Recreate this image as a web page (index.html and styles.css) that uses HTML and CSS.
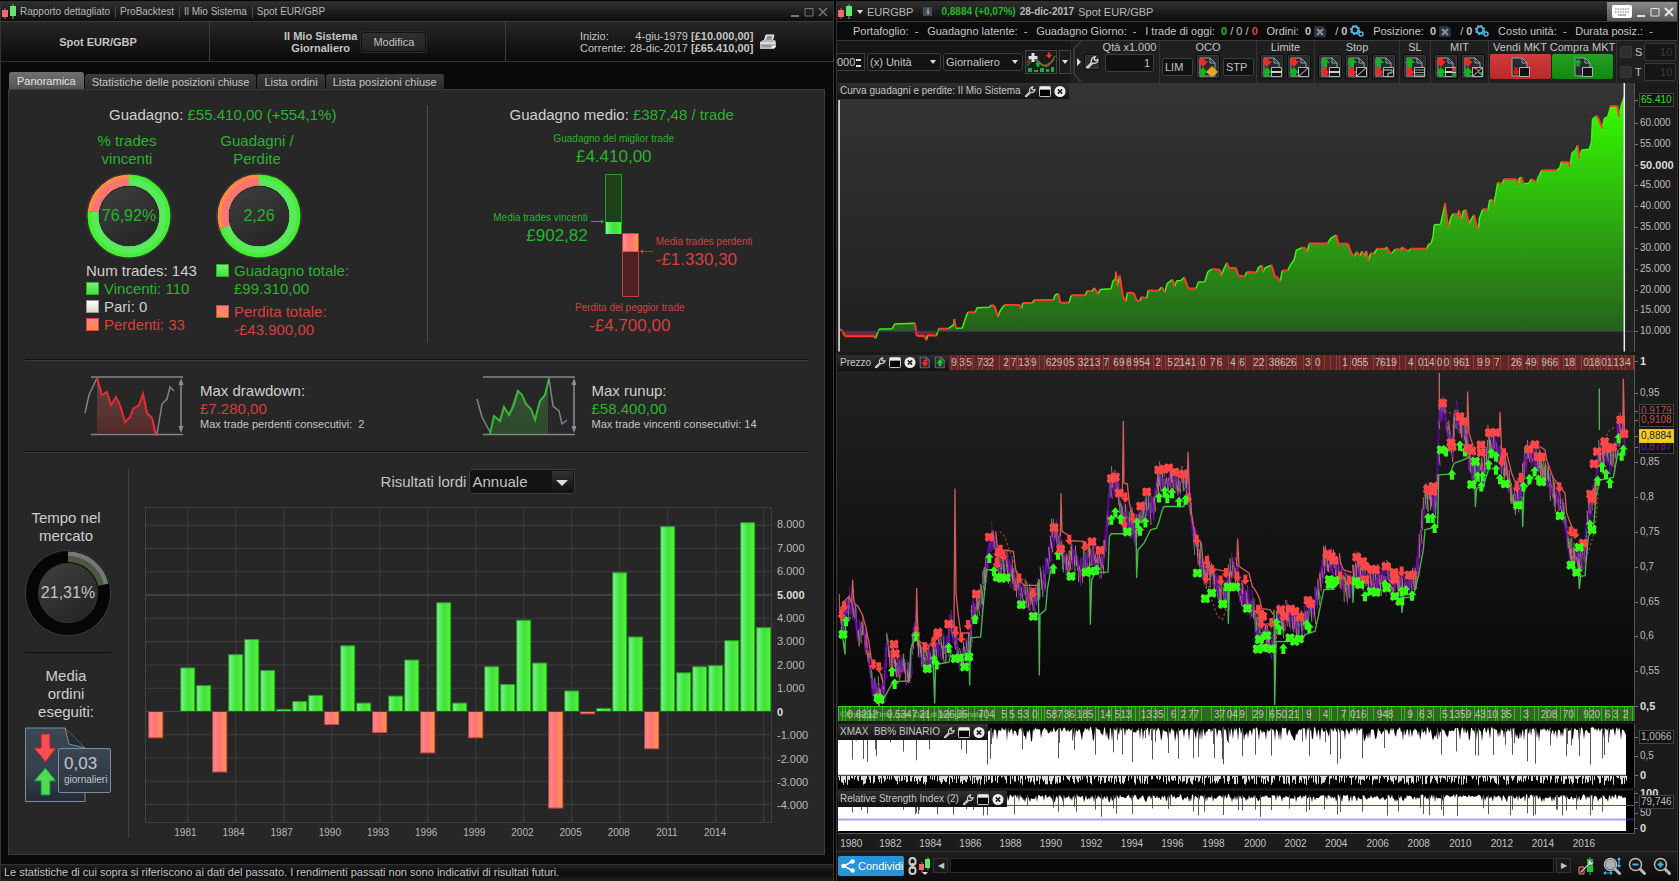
FILE: index.html
```html
<!DOCTYPE html>
<html lang="it">
<head>
<meta charset="utf-8">
<title>Rapporto dettagliato - Spot EUR/GBP</title>
<link rel="stylesheet" href="styles.css">
</head>
<body>
<svg class="defs" aria-hidden="true">
  <defs>
    <linearGradient id="g-green-h"><stop offset="0" stop-color="#7dfb84"/><stop offset=".3" stop-color="#55e85e"/><stop offset=".55" stop-color="#3fe03a"/><stop offset="1" stop-color="#4dfb35"/></linearGradient>
    <linearGradient id="g-red-h"><stop offset="0" stop-color="#ff8f8f"/><stop offset=".45" stop-color="#fb7272"/><stop offset="1" stop-color="#ff9850"/></linearGradient>
    <linearGradient id="g-equity" x2="0" y2="1"><stop offset="0" stop-color="#35ff00"/><stop offset="1" stop-color="#255a1e"/></linearGradient>
    <linearGradient id="g-down" x2="0" y2="1"><stop offset="0" stop-color="#5d4646"/><stop offset="1" stop-color="#552a28"/></linearGradient>
    <linearGradient id="g-up" x2="0" y2="1"><stop offset="0" stop-color="#3f4f40"/><stop offset="1" stop-color="#2b4a29"/></linearGradient>
    <linearGradient id="g-hub" x2=".6" y2="1"><stop offset="0" stop-color="#404040"/><stop offset="1" stop-color="#262626"/></linearGradient>
    <linearGradient id="g-slate" x2="0" y2="1"><stop offset="0" stop-color="#3a4754"/><stop offset=".6" stop-color="#35414c"/><stop offset="1" stop-color="#232b35"/></linearGradient>
  </defs>
  <symbol id="candles" viewBox="0 0 15 15"><path d="M3 4v11" stroke="#e55"/><path d="M11 0v15" stroke="#5c6"/><path d="M0 6h6v7H0z" fill="#f46a6a"/><path d="M8 2h6v10H8z" fill="#5fe86a"/></symbol>
  <symbol id="wrench" viewBox="0 0 14 14"><path d="M1.5 12.5l5-5C5.500 5 7.500 1.500 10.500 1.500L9 4l1.500 1.500L13 4.500c0 3-3 4.500-5 3.500l-5 5z" fill="#333" stroke="#ddd" stroke-width="1.200" stroke-linejoin="round"/></symbol>
  <symbol id="win" viewBox="0 0 13 12"><rect x=".5" y=".5" width="12" height="11" rx="1" fill="#000" stroke="#ddd"/><path d="M1 1h11v3H1z" fill="#eee"/></symbol>
  <symbol id="shut" viewBox="0 0 13 13"><circle cx="6.500" cy="6.500" r="6" fill="#eee"/><path d="M4.200 4.200l4.600 4.600M8.800 4.200l-4.600 4.600" stroke="#222" stroke-width="1.800"/></symbol>
  <symbol id="down" viewBox="0 0 10 10"><path d="M3 0h4v4h3L5 10 0 4h3z"/></symbol>
  <symbol id="up" viewBox="0 0 10 10"><path d="M3 10h4V6h3L5 0 0 6h3z"/></symbol>
  <symbol id="doc" viewBox="0 0 20 20"><path d="M2 1h10l5 5v13H2z" fill="#262b30" stroke="#9aa4ac"/><path d="M12 1v5h5" fill="none" stroke="#9aa4ac"/></symbol>
  <symbol id="ord-sell-buy" viewBox="0 0 20 20"><use href="#doc"/><use href="#down" width="10" height="10" fill="#ff2424"/><use href="#up" y="10" width="10" height="10" fill="#10b51c"/></symbol>
  <symbol id="ord-buy-sell" viewBox="0 0 20 20"><use href="#doc"/><use href="#up" width="10" height="10" fill="#10b51c"/><use href="#down" y="10" width="10" height="10" fill="#ff2424"/></symbol>
  <symbol id="card" viewBox="0 0 20 20"><path d="M9.500 10.500h10v9h-10z" fill="#111" stroke="#aab2b8"/></symbol>
  <symbol id="c-line" viewBox="0 0 20 20"><use href="#card"/><path d="M9 15h11" stroke="#ccc" stroke-width="2"/></symbol>
  <symbol id="c-diag" viewBox="0 0 20 20"><use href="#card"/><path d="M10 19l9-8" stroke="#ccc"/></symbol>
  <symbol id="c-step" viewBox="0 0 20 20"><use href="#card"/><path d="M10 13h8v3h-4v3" fill="none" stroke="#ccc"/></symbol>
  <symbol id="c-rows" viewBox="0 0 20 20"><use href="#card"/><path d="M10 13h9M10 15.500h9M10 18h9" stroke="#999"/></symbol>
  <symbol id="c-duo" viewBox="0 0 20 20"><use href="#c-line"/><path d="M16 11h4v4h-4z" fill="#d33"/><path d="M16 16h4v4h-4z" fill="#294"/></symbol>
  <symbol id="c-cross" viewBox="0 0 20 20"><use href="#c-diag"/><path d="M10 11h4l3 4z" fill="#e44"/><path d="M14 15l5 4v-4z" fill="#294"/></symbol>
  <symbol id="mini-x" viewBox="0 0 12 11"><path d="M0 0h9l3 3v8H0z" fill="#2a3138"/><path d="M3 3l6 6M9 3l-6 6" stroke="#87919a" stroke-width="2"/></symbol>
  <symbol id="gears" viewBox="0 0 14 12"><circle cx="5" cy="5" r="3.400" fill="none" stroke="#4fb4e6" stroke-width="2"/><circle cx="5" cy="5" r="4.600" fill="none" stroke="#4fb4e6" stroke-width="1.200" stroke-dasharray="1.800"/><circle cx="11" cy="9" r="2" fill="none" stroke="#4fb4e6" stroke-width="1.500"/></symbol>
  <symbol id="lens" viewBox="0 0 18 18"><path d="M11 11l5.500 5.500" stroke="#bbb" stroke-width="3" stroke-linecap="round"/><circle cx="7.500" cy="7.500" r="6" fill="#161616" stroke="#bbb" stroke-width="1.500"/></symbol>
</svg>

<div class="desktop">
<section class="window report">
  <header class="titlebar">
    <svg class="logo"><use href="#candles"/></svg>
    <span class="crumb">Rapporto dettagliato</span><span class="crumb">ProBacktest</span><span class="crumb">Il Mio Sistema</span><span class="crumb">Spot EUR/GBP</span>
    <span class="winbtns">
      <button aria-label="Riduci"><svg viewBox="0 0 10 10"><path d="M1 9h8" stroke-width="2"/></svg></button>
      <button aria-label="Ingrandisci"><svg viewBox="0 0 10 10"><path d="M1 1.500h8v7.500H1z"/></svg></button>
      <button aria-label="Chiudi"><svg viewBox="0 0 10 10"><path d="M1 1l8 8M9 1L1 9" stroke-width="1.500"/></svg></button>
    </span>
  </header>
  <div class="summary">
    <div class="cell instrument"><b>Spot EUR/GBP</b></div>
    <div class="cell system"><b>Il Mio Sistema<br>Giornaliero</b><button class="edit">Modifica</button></div>
    <div class="cell period">
      <dl><dt>Inizio:</dt><dd>4-giu-1979 <b>[£10.000,00]</b></dd><dt>Corrente:</dt><dd>28-dic-2017 <b>[£65.410,00]</b></dd></dl>
      <button class="print" aria-label="Stampa"><svg viewBox="0 0 18 16"><path d="M5 8L7 1h8l-2 7z" fill="#ccd" stroke="#eee"/><path d="M8 3h5M7.500 5h5" stroke="#555"/><path d="M1 8l3-2h12l1 2v5l-3 2H1z" fill="#b4b8bd"/><path d="M1 9h15" stroke="#fff"/><path d="M3 12h10" stroke="#667"/><path d="M12 12h5l-2.500 3z" fill="#fff"/></svg></button>
    </div>
  </div>
  <nav class="tabs" role="tablist">
    <button role="tab" class="on" aria-selected="true">Panoramica</button><button role="tab">Statistiche delle posizioni chiuse</button><button role="tab">Lista ordini</button><button role="tab">Lista posizioni chiuse</button>
  </nav>
  <main class="panel">
    <section class="gains">
      <div class="totals">
        <h2>Guadagno: <span class="pos">£55.410,00 (+554,1%)</span></h2>
        <div class="rings">
          <div class="ringcol">
            <h3 class="pos">% trades<br>vincenti</h3>
            <div class="ring" data-share="76.92"><span class="pos">76,92%</span></div>
            <ul class="legend">
              <li>Num trades: 143</li>
              <li class="pos"><i class="sw g"></i>Vincenti: 110</li>
              <li><i class="sw w"></i>Pari: 0</li>
              <li class="neg"><i class="sw r"></i>Perdenti: 33</li>
            </ul>
          </div>
          <div class="ringcol">
            <h3 class="pos">Guadagni /<br>Perdite</h3>
            <div class="ring" data-share="70"><span class="pos">2,26</span></div>
            <ul class="legend wide">
              <li class="pos"><i class="sw g"></i><span>Guadagno totale:<br>£99.310,00</span></li>
              <li class="neg"><i class="sw r"></i><span>Perdita totale:<br>-£43.900,00</span></li>
            </ul>
          </div>
        </div>
      </div>
      <div class="average">
        <h2>Guadagno medio: <span class="pos">£387,48 / trade</span></h2>
        <p class="best pos"><small>Guadagno del miglior trade</small>£4.410,00</p>
        <div class="avgrow">
          <p class="pos win"><small>Media trades vincenti</small>£902,82</p>
          <svg class="avgbars" viewBox="0 0 62 124"><path d="M14.500.500h16v59h-16z" fill="#1d421b" stroke="#259a2b"/><path d="M15 48h15v12H15z" fill="url(#g-green-h)"/><path d="M31.500 59.500h16v63h-16z" fill="#4e2222" stroke="#c33f3f"/><path d="M32 60h15v17H32z" fill="url(#g-red-h)"/><path d="M31 77.500h17" stroke="#e44"/><path d="M0 47.500h11" stroke="#2bb32f"/><path d="M10 45.500l3 2-3 2z" fill="#2bb32f"/><path d="M51 77.500h11" stroke="#a33"/><path d="M52 75.500l-3 2 3 2z" fill="#d44"/></svg>
          <p class="neg lose"><small>Media trades perdenti</small>-£1.330,30</p>
        </div>
        <p class="worst neg"><small>Perdita del peggior trade</small>-£4.700,00</p>
      </div>
    </section>
    <section class="extremes">
      <div class="extreme">
        <svg viewBox="0 0 100 60"><path d="M13 2l5 17 5-5 4 14 5-8 4 8 5 18 5-4 4-9 5-4 4-11 5 19 5 5 4 15H13z" fill="url(#g-down)"/><path d="M7 1h92M7 58.500h92" stroke="#85858c" stroke-width="1.500"/><path d="M1 37L5 19 13 2M73 58l5-30 5-5 3-12 4 4" fill="none" stroke="#84818f" stroke-width="1.500"/><path d="M13 2l5 17 5-3 4 13 5-8 4 8 5 17 5-5 3-8 6-4 4-11 4 19 5 5 5 23" fill="none" stroke="#e82c2c" stroke-width="2"/><path d="M97 5v50" stroke="#8f8c99" stroke-width="1.500"/><path d="M97 2l-2.500 7h5zM97 57l-2.500-7h5z" fill="#8f8c99"/></svg>
        <div><h3>Max drawdown:</h3><p class="neg">£7.280,00</p><small>Max trade perdenti consecutivi: &nbsp;2</small></div>
      </div>
      <div class="extreme">
        <svg viewBox="0 0 100 60"><path d="M14 58l4-17 5 4 4-14 5 8 9-25 9 14 5 5 3 11 5-19 5-6 4-17v56z" fill="url(#g-up)"/><path d="M7 1h92M7 58.500h92" stroke="#85858c" stroke-width="1.500"/><path d="M1 23l5 18 8 15M73 2l4 28 6 5 3 13 5-4" fill="none" stroke="#84818f" stroke-width="1.500"/><path d="M14 58l4-18 6 5 4-14 5 8 4-8 5-16 4 4 4 9 5 5 4 11 5-19 5-6 4-16" fill="none" stroke="#35b935" stroke-width="2"/><path d="M98 5v50" stroke="#8f8c99" stroke-width="1.500"/><path d="M98 2l-2.500 7h5zM98 57l-2.500-7h5z" fill="#8f8c99"/></svg>
        <div><h3>Max runup:</h3><p class="pos">£58.400,00</p><small>Max trade vincenti consecutivi: 14</small></div>
      </div>
    </section>
    <section class="results">
      <aside>
        <div class="market"><h3>Tempo nel<br>mercato</h3><div class="ring dark" data-share="21.31"><span>21,31%</span></div></div>
        <div class="orders"><h3>Media<br>ordini<br>eseguiti:</h3>
          <div class="sheet">
            <svg viewBox="0 0 87 76"><path d="M.500 1H40l20 20v53.500H.500z" fill="url(#g-slate)" stroke="#7d8c9b"/><path d="M40 1l4 16 16 4" fill="#222b33" stroke="#7d8c9b"/><path d="M16 7h9v14h6L20.500 35 9 21h7z" fill="#f85050" stroke="#a22"/><path d="M16 68h9V54h6L20.500 41 9 54h7z" fill="#4fdc53" stroke="#184"/></svg>
            <div class="tag">0,03<small>giornalieri</small></div>
          </div>
        </div>
      </aside>
      <div class="yearly">
        <div class="pick"><label for="gran">Risultati lordi</label><span class="drop big"><select id="gran"><option>Annuale</option><option>Mensile</option></select></span></div>
        <div class="plot" id="yearly"></div>
      </div>
    </section>
  </main>
  <footer class="disclaimer">Le statistiche di cui sopra si riferiscono ai dati del passato. I rendimenti passati non sono indicativi di risultati futuri.</footer>
</section>

<section class="window trading">
  <header class="titlebar">
    <svg class="logo"><use href="#candles"/></svg><span class="caret"></span>
    <span class="sym">EURGBP</span><button class="info" aria-label="Informazioni">i</button><b class="pos">0,8884 (+0,07%)</b><b>28-dic-2017</b><span>Spot EUR/GBP</span>
    <span class="winbtns light">
      <button aria-label="Tastiera" class="kb"><svg viewBox="0 0 20 13"><rect width="20" height="13" rx="2" fill="#fff" stroke="none"/><path d="M3 4h14M3 7h14" stroke="#777" stroke-dasharray="1.500 1"/><path d="M6 10h8" stroke="#777"/></svg></button>
      <button aria-label="Riduci"><svg viewBox="0 0 10 10"><path d="M1 9h8" stroke-width="2"/></svg></button>
      <button aria-label="Ingrandisci"><svg viewBox="0 0 10 10"><path d="M1 1.500h8v7.500H1z"/></svg></button>
      <button aria-label="Chiudi"><svg viewBox="0 0 10 10"><path d="M1 1l8 8M9 1L1 9" stroke-width="2"/></svg></button>
    </span>
  </header>
  <div class="account">
    <span>Portafoglio:&nbsp; -</span><span>Guadagno latente:&nbsp; -</span><span>Guadagno Giorno:&nbsp; -</span><span>I trade di oggi:&nbsp; <b class="pos">0</b> / 0 / <b class="neg">0</b></span>
    <span class="ico">Ordini:&nbsp; <b>0</b> <svg class="m"><use href="#mini-x"/></svg>&nbsp; / <b>0</b><svg class="m gear"><use href="#gears"/></svg></span>
    <span class="ico">Posizione:&nbsp; <b>0</b> <svg class="m"><use href="#mini-x"/></svg>&nbsp; / <b>0</b><svg class="m gear"><use href="#gears"/></svg></span>
    <span>Costo unità:&nbsp; -</span><span>Durata posiz.:&nbsp; -</span>
  </div>
  <div class="toolbar">
    <div class="view">
      <span class="spin"><input value="000" aria-label="Barre"><i></i></span>
      <span class="drop unit"><select aria-label="Unità"><option>(x) Unità</option></select></span>
      <span class="drop frame"><select aria-label="Periodo"><option>Giornaliero</option></select></span>
      <button class="ind" aria-label="Indicatori"><svg viewBox="0 0 30 22"><path d="M1 12q6-9 12-1t15-3" fill="none" stroke="#d33" stroke-width="1.500"/><path d="M1 15q7-10 14-2t14-8" fill="none" stroke="#3a3"/><path d="M2 17h4v4H2zM8 19h4v2H8zM14 17h4v4h-4zM20 18h3v3h-3zM25 16h3v5h-3z" fill="#2a3"/><path d="M7 2v9M2.500 6.500h9" stroke="#dde" stroke-width="3"/><use href="#down" x="20" y="1" width="6" height="7" fill="#e33"/><use href="#up" x="9" y="9" width="6" height="8" fill="#1b2"/></svg></button>
      <button class="more" aria-label="Altri indicatori"><i class="tri"></i></button>
    </div>
    <div class="trade">
      <svg class="notch" viewBox="0 0 11 41"><path d="M8 0L1 8v25l7 8" fill="none" stroke="#555"/><path d="M4 17v8l4-4z" fill="#ddd"/></svg>
      <button class="tool" aria-label="Impostazioni"><svg><use href="#wrench"/></svg></button>
      <div class="grp qty"><label for="qty">Qtà x1.000</label><input id="qty" value="1"></div>
      <div class="grp sep oco"><span>OCO</span><div><button class="txt">LIM</button><button class="ord" aria-label="OCO"><svg><use href="#ord-sell-buy"/><path d="M14 9l6 6-6 5-6-5z" fill="#e9a51f"/></svg></button><button class="txt">STP</button></div></div>
      <div class="grp sep"><span>Limite</span><div><button class="ord" aria-label="Limite"><svg><use href="#ord-sell-buy"/><use href="#c-line"/></svg></button><button class="ord" aria-label="Limite obliquo"><svg><use href="#ord-sell-buy"/><use href="#c-diag"/></svg></button></div></div>
      <div class="grp sep"><span>Stop</span><div><button class="ord" aria-label="Stop"><svg><use href="#ord-buy-sell"/><use href="#c-line"/></svg></button><button class="ord" aria-label="Stop obliquo"><svg><use href="#ord-buy-sell"/><use href="#c-diag"/></svg></button><button class="ord" aria-label="Stop inseguitore"><svg><use href="#ord-buy-sell"/><use href="#c-step"/></svg></button></div></div>
      <div class="grp sep"><span>SL</span><div><button class="ord" aria-label="SL"><svg><use href="#ord-buy-sell"/><use href="#c-rows"/></svg></button></div></div>
      <div class="grp sep"><span>MIT</span><div><button class="ord" aria-label="MIT"><svg><use href="#ord-sell-buy"/><use href="#c-duo"/></svg></button><button class="ord" aria-label="MIT obliquo"><svg><use href="#ord-sell-buy"/><use href="#c-cross"/></svg></button></div></div>
      <div class="grp sep mkt"><label for="sell">Vendi MKT</label><button class="sell" id="sell"><svg><use href="#doc"/><use href="#down" x="2" y="10" width="8" height="9" fill="#e11"/><use href="#card"/></svg></button></div>
      <div class="grp mkt"><label for="buy">Compra MKT</label><button class="buy" id="buy"><svg><use href="#doc"/><use href="#up" x="1" y="1" width="8" height="9" fill="#1a2"/><use href="#card"/></svg></button></div>
      <div class="st sep"><label><input type="checkbox">S</label><input value="10" aria-label="Stop" disabled><label><input type="checkbox">T</label><input value="10" aria-label="Target" disabled></div>
    </div>
  </div>
  <div class="charts">
    <div class="chart">
      <div class="canvas" id="equity"><div class="cap">Curva guadagni e perdite: Il Mio Sistema<svg><use href="#wrench"/></svg><svg><use href="#win"/></svg><svg><use href="#shut"/></svg></div></div>
      <div class="axis" id="ax-equity"></div>
    </div>
    <div class="chart">
      <div class="canvas" id="price"><div class="strip red" id="sells"></div><div class="strip green" id="buys"></div><div class="watermark">©ProRealTime.com &nbsp;Dati di fine giornata</div>
        <div class="cap">Prezzo<svg><use href="#wrench"/></svg><svg><use href="#win"/></svg><svg><use href="#shut"/></svg><svg viewBox="0 0 20 20"><use href="#doc"/><use href="#down" x="4" y="5" width="12" height="12" fill="#f22"/></svg><svg viewBox="0 0 20 20"><use href="#doc"/><use href="#up" x="4" y="4" width="12" height="12" fill="#1c2"/></svg></div></div>
      <div class="axis" id="ax-price"></div>
    </div>
    <div class="chart">
      <div class="canvas" id="xmax"><div class="cap">XMAX &nbsp;BB% BINARIO<svg><use href="#wrench"/></svg><svg><use href="#win"/></svg><svg><use href="#shut"/></svg></div></div>
      <div class="axis" id="ax-xmax"></div>
    </div>
    <div class="chart">
      <div class="canvas" id="rsi"><div class="cap">Relative Strength Index (2)<svg><use href="#wrench"/></svg><svg><use href="#win"/></svg><svg><use href="#shut"/></svg></div></div>
      <div class="axis" id="ax-rsi"></div>
    </div>
  </div>
  <div class="years" id="years"></div>
  <footer class="bottombar">
    <button class="share"><svg viewBox="0 0 14 14"><path d="M12 2L3 7l9 5" fill="none" stroke="#fff" stroke-width="1.500"/><g fill="#fff"><circle cx="11.500" cy="2.500" r="2.300"/><circle cx="2.500" cy="7" r="2.300"/><circle cx="11.500" cy="11.500" r="2.300"/></g></svg>Condividi</button>
    <button class="flat" aria-label="Collega"><svg viewBox="0 0 9 18"><g fill="none" stroke="#ccc" stroke-width="2"><rect x="1.500" y="1" width="6" height="7" rx="3"/><rect x="1.500" y="10" width="6" height="7" rx="3"/><path d="M4.500 6v6"/></g></svg></button>
    <button class="flat wide" aria-label="Stile grafico"><svg viewBox="0 0 12 18"><path d="M3 5v11" stroke="#e55"/><path d="M9 0v13" stroke="#5c6"/><path d="M0 7h5v6H0z" fill="#f46a6a"/><path d="M6 2h5v9H6z" fill="#5fe86a"/><path d="M3 15h6l-3 3z" fill="#ddd"/></svg></button>
    <button class="arrow" aria-label="Indietro">◀</button><div class="track"></div><button class="arrow" aria-label="Avanti">▶</button>
    <button class="flat big" aria-label="Opzioni grafico"><svg viewBox="0 0 18 18"><path d="M9 2h6v13H9z" fill="#1c3"/><path d="M12 0v18" stroke="#1c3"/><path d="M1 10h5v7H1z" fill="#511" stroke="#e88"/><path d="M2 15l8-8V4l3-2v3h3l-2 3h-3l-8 8z" fill="#ddd" stroke="#333" stroke-width=".5"/></svg></button>
    <button class="flat big" aria-label="Adatta"><svg viewBox="0 0 18 18"><use href="#lens"/><circle cx="7.500" cy="7.500" r="5" fill="#a9b0b8"/><path d="M16 1v9M1 16h8" stroke="#3fb5ea" stroke-width="1.200"/><path d="M14 3l2-3 2 3zM14 8l2 3 2-3zM3 14l-3 2 3 2zM7 14l3 2-3 2z" fill="#3fb5ea"/></svg></button>
    <button class="flat big" aria-label="Riduci zoom"><svg viewBox="0 0 18 18"><use href="#lens"/><path d="M4.500 7.500h6" stroke="#3fb5ea" stroke-width="2"/></svg></button>
    <button class="flat big" aria-label="Aumenta zoom"><svg viewBox="0 0 18 18"><use href="#lens"/><path d="M4.500 7.500h6M7.500 4.500v6" stroke="#3fb5ea" stroke-width="2"/></svg></button>
  </footer>
</section>
</div>
<script src="app.js"></script>
</body>
</html>
```
FILE: styles.css
```css
* { box-sizing: border-box; }
body { margin: 0; background: #050505; color: #c4c4c4; font: 11px/12px "Liberation Sans", Arial, sans-serif; }
h2, h3, p, ul, dl, dd { margin: 0; padding: 0; font-weight: normal; }
button, input, select { font: inherit; color: inherit; margin: 0; padding: 0; border: 0; background: none; }
.defs { position: absolute; width: 0; height: 0; }
.pos { color: #28b52c; }
.neg { color: #d64040; }

.desktop { display: grid; grid-template-columns: 835fr 844fr; min-height: 100vh; padding-top: 1px; }
.window { display: flex; flex-direction: column; min-width: 0; border-top: 1px solid #2c2c2c; border-left: 1px solid #333; border-right: 1px solid #333; background: #090909; white-space: nowrap; }
.report { margin-right: 1px; }
.trading { margin: 0 1px 0 1px; }

.titlebar { display: flex; align-items: center; height: 19px; padding-left: 1px; background: linear-gradient(#2f2f2f, #0d0d0d); color: #b8b8b8; font-size: 10px; }
.titlebar .logo { width: 15px; height: 15px; margin-right: 3px; }
.crumb + .crumb { margin-left: 5px; padding-left: 4px; border-left: 1px solid #4a4a4a; }
.winbtns { display: flex; gap: 4px; margin-left: auto; padding-right: 5px; }
.winbtns button { width: 10px; height: 10px; }
.winbtns svg { display: block; width: 100%; height: 100%; fill: none; stroke: #777; }
.winbtns.light { align-self: stretch; align-items: center; padding: 0 3px 0 5px; background: linear-gradient(#8a8a8a, #555); }
.winbtns.light svg { stroke: #e5e5e5; }
.winbtns .kb { width: 20px; height: 13px; }

.summary { display: grid; grid-template-columns: 208fr 296fr 328fr; height: 41px; border-bottom: 1px solid #333; }
.cell { display: flex; align-items: center; border-top: 1px solid #3c3c3c; border-left: 1px solid #3c3c3c; background: linear-gradient(#262626, #0a0a0a); }
.instrument { justify-content: center; padding-right: 14px; border-left: 0; }
.system { gap: 4px; padding-left: 74px; text-align: center; }
.edit { width: 65px; height: 20px; border: 1px solid #111; border-radius: 3px; background: linear-gradient(#303030, #222); box-shadow: 0 0 0 1px #2a2a2a; }
.period { gap: 6px; padding-left: 74px; }
.period dl { display: grid; grid-template-columns: auto auto; gap: 0 4px; }
.period dd { text-align: right; }
.print { width: 18px; height: 16px; }
.print svg { display: block; width: 18px; height: 16px; }

.tabs { display: flex; align-items: flex-end; gap: 1px; padding: 10px 8px 0; }
.tabs button { height: 15px; padding: 0 7px; border-radius: 3px 3px 0 0; background: linear-gradient(#3c3c3c, #2a2a2a); }
.tabs .on { height: 17px; padding: 0 8px; background: linear-gradient(#707070, #555); color: #e2e2e2; }
.panel { flex: 1; display: flex; flex-direction: column; margin: 0 8px 9px 7px; padding: 16px 16px; border: 1px solid #3c3c3c; background: #272727; }
h2, h3, .legend, .extreme p { font-size: 15px; line-height: 18px; }

.gains { display: grid; grid-template-columns: 402fr 380fr; height: 254px; padding-bottom: 16px; border-bottom: 1px solid #111; box-shadow: 0 1px #3a3a3a; }
.totals { border-right: 1px solid #4b4b4b; }
.totals h2 { padding: 0 6px 8px 0; text-align: center; }
.rings { display: flex; padding-left: 61px; }
.ringcol { width: 130px; }
.ringcol h3 { width: 82px; text-align: center; }
.ring { display: grid; place-items: center; position: relative; width: 86px; height: 86px; margin: 5px 0 3px; font-size: 16px; }
.ring svg { position: absolute; inset: 0; width: 100%; height: 100%; }
.ring span { position: relative; }
.legend { list-style: none; white-space: nowrap; }
.legend li { display: flex; gap: 5px; color: #d0d0d0; }
.legend .pos { color: #28b52c; }
.legend .neg { color: #d64040; }
.legend.wide li + li { margin-top: 5px; }
.sw { flex: none; width: 13px; height: 13px; margin-top: 2px; }
.sw.g { border: 1px solid #3a3; background: linear-gradient(#77f07c, #3de62f); }
.sw.w { border: 1px solid #999; background: linear-gradient(#fff, #d8dcc8); }
.sw.r { border: 1px solid #d44; background: linear-gradient(#ff8080, #ff9048); }
.average { display: flex; flex-direction: column; align-items: center; padding-left: 8px; }
.average h2 { color: #d0d0d0; }
.average small { display: block; font-size: 10px; line-height: 14px; }
.average p { font-size: 17px; line-height: 21px; }
.best { padding: 8px 16px 7px 0; text-align: center; }
.avgrow { display: grid; grid-template-columns: 1fr 62px 1fr; align-self: stretch; }
.avgbars { width: 62px; height: 124px; }
.win { padding: 37px 3px 0 0; text-align: right; }
.lose { padding: 61px 0 0 3px; }
.worst { padding-top: 3px; padding-left: 16px; text-align: center; }
.totals h2, h3 { color: #cfcfcf; }
h3.pos { color: #28b52c; }

.extremes { display: grid; grid-template-columns: 1fr 1fr; height: 92px; border-bottom: 1px solid #111; box-shadow: 0 1px #3a3a3a; }
.extreme { display: flex; align-items: center; gap: 16px; padding-left: 59px; }
.extreme svg { width: 100px; height: 60px; }
.extreme small { font-size: 11px; }

.results { flex: 1; display: grid; grid-template-columns: 104px 1fr; padding-top: 17px; }
aside { display: flex; flex-direction: column; padding-right: 17px; border-right: 1px solid #404040; text-align: center; }
.market { padding: 40px 0 16px; border-bottom: 1px solid #0c0c0c; }
.market h3, .orders h3 { padding-right: 4px; }
.market .ring { margin: 5px 0 0; }
.orders { padding-top: 14px; }
.sheet { position: relative; height: 76px; margin-top: 6px; }
.sheet svg { width: 87px; height: 76px; }
.tag { position: absolute; left: 33px; top: 21px; padding: 6px 3px 5px 5px; border: 1px solid #7d8c9b; border-radius: 2px; background: linear-gradient(#3a4754, #2a333d); font-size: 17px; line-height: 18px; text-align: left; }
.tag small { display: block; font-size: 10px; line-height: 14px; }
.yearly { display: flex; flex-direction: column; padding-left: 16px; }
.pick { display: flex; align-items: center; justify-content: center; gap: 3px; padding-left: 3px; font-size: 15px; }
.drop { position: relative; display: inline-flex; }
.drop select { width: 100%; appearance: none; border: 1px solid #3d3d3d; border-radius: 3px; background: #131313; padding-left: 2px; }
.drop::after { content: ""; position: absolute; right: 5px; top: 50%; margin-top: -2px; border: 3px solid transparent; border-top: 4px solid #ddd; border-bottom: 0; pointer-events: none; }
.big.drop { width: 106px; height: 25px; }
.big.drop::before { content: ""; position: absolute; right: 2px; top: 2px; bottom: 2px; width: 21px; background: linear-gradient(#333, #111); }
.big.drop::after { right: 7px; border-width: 6px 6px 0; }
.plot { position: relative; flex: 1; margin: 13px 36px 15px 0; }
.plot svg { display: block; position: absolute; width: 100%; height: 100%; border: 1px solid #404040; }
.tick { position: absolute; white-space: nowrap; transform: translateY(-50%); }
.plot .tick { left: 100%; margin-left: 5px; color: #b8b8b8; }
.plot .yr, .years span { position: absolute; transform: translateX(-50%); }
.plot .yr { top: 100%; margin-top: 4px; font-size: 10px; color: #b8b8b8; }
.tick.strong { font-weight: bold; color: #ddd; }
.disclaimer { height: 17px; padding: 1px 3px; border-top: 1px solid #333; background: linear-gradient(#202020, #0c0c0c 60%, #222); }

.caret, .tri { width: 0; height: 0; border: 3px solid transparent; border-top: 4px solid #ddd; border-bottom: 0; }
.trading .titlebar { gap: 4px; }
.trading .logo { margin-right: 0; }
.sym, .titlebar b + span { font-size: 11px; }
.info { width: 9px; height: 9px; margin: 0 5px 0 6px; background: #444b55; font: bold 9px/9px "Liberation Serif", serif; }
.account { display: flex; justify-content: space-between; align-items: center; height: 19px; padding: 0 24px 0 16px; border-top: 1px solid #3a3a3a; background: #0b0b0b; }
.ico { display: flex; align-items: center; gap: 3px; }
.m { width: 12px; height: 11px; }
.m.gear { width: 14px; height: 12px; }
.toolbar { display: flex; height: 43px; border-top: 1px solid #3a3a3a; background: #161616; }
.view { display: flex; align-items: center; gap: 2px; }
.view .drop select { height: 18px; }
.unit { width: 74px; }
.frame { width: 80px; }
.spin { display: flex; align-items: center; width: 28px; height: 18px; border: 1px solid #3d3d3d; border-left: 0; }
.spin input { width: 18px; }
.spin i { width: 7px; height: 9px; background: linear-gradient(#ddd, #ddd) 50% 1px / 5px 2px no-repeat, linear-gradient(#ddd, #ddd) 50% 7px / 5px 2px no-repeat; }
.ind { width: 32px; height: 24px; border: 1px solid #444; background: #1c1c1c; }
.ind svg { display: block; width: 30px; height: 22px; }
.more { display: grid; place-items: center; width: 12px; height: 24px; border: 1px solid #444; background: #1c1c1c; }
.trade { flex: 1; display: flex; padding-left: 2px; background: #1f1f1f; }
.notch { width: 11px; height: 41px; }
.tool, .ord { display: grid; place-items: center; border: 1px solid #0c0c0c; border-radius: 2px; background: #2b2b2b; box-shadow: inset 0 0 0 1px #3a3a3a; }
.tool { width: 16px; height: 16px; margin: 13px 3px 0 0; }
.tool svg { width: 14px; height: 14px; }
.grp { display: flex; flex-direction: column; align-items: center; padding: 0 3px; }
.grp label, .grp > span { height: 13px; }
.grp > div { display: flex; align-items: center; gap: 3px; }
.grp.qty { width: 53px; margin-right: 3px; padding: 0; }
.qty input { width: 49px; height: 18px; border: 1px solid #3d3d3d; border-radius: 2px; background: #111; text-align: right; padding-right: 3px; }
.sep { border-left: 1px solid #333; }
.txt { width: 31px; height: 18px; border: 1px solid #3d3d3d; border-radius: 2px; background: #111; text-align: left; padding-left: 2px; }
.grp.oco { padding: 0 2px; }
.oco > div { margin-top: 0; }
.ord { width: 24px; height: 25px; }
.ord svg, .mkt svg { width: 20px; height: 20px; }
.grp.mkt { width: 63px; padding: 0 1px; }
.mkt button { display: grid; place-items: center; width: 61px; height: 25px; border-radius: 2px; }
.sell { background: linear-gradient(#d13c3c, #bb2828); }
.buy { background: linear-gradient(#25a025, #0f8a0f); }
.st { flex: 1; display: grid; grid-template-columns: 1fr 32px; gap: 2px; align-content: center; margin-left: 2px; padding: 0 3px; }
.st label { display: flex; align-items: center; gap: 3px; }
.st input { height: 18px; border: 1px solid #383838; border-radius: 2px; background: #151515; color: #3c3c3c; text-align: right; padding-right: 3px; width: 32px; }
.st [type=checkbox] { appearance: none; width: 12px; height: 12px; background: #2f2f2f; }

.charts { flex: 1; display: grid; grid-template-rows: 269fr 367fr 64fr 42fr; gap: 3px; background: #1a1a1a; }
.chart { display: grid; grid-template-columns: 1fr 42px; min-height: 0; }
.canvas { position: relative; overflow: hidden; margin-left: 1px; border-right: 1px solid #555; background: #000; }
#equity { background: linear-gradient(#343434, #1f1f1f); }
#price { background: linear-gradient(#222, #060606); }
.canvas > svg { position: absolute; inset: 0; width: 100%; height: 100%; }
.cap { position: absolute; left: 0; top: 0; display: flex; align-items: center; gap: 3px; height: 16px; padding: 0 3px 0 2px; background: linear-gradient(#303030, #111); font-size: 10px; }
.cap svg { width: 12px; height: 13px; }
.axis { position: relative; background: #1b1b1b; }
.axis .tick { left: 5px; color: #bdbdbd; font-size: 10px; }
.axis .tick::before { content: ""; position: absolute; left: -5px; top: 50%; width: 3px; height: 1px; background: #777; }
.axis .tick.strong { font-size: 11px; color: #ddd; }
.axis .box { left: 4px; padding: 0 1px; border: 1px solid #444; background: #111; font-size: 10px; }
.axis .lime { color: #3ae02a; }
.axis .rosy { color: #c05050; }
.axis .plum { color: #7a1fa5; }
.axis .gold { border-color: #e8c010; background: #f3cf1c; color: #222; }
.strip { position: absolute; left: 0; right: 0; height: 15px; overflow: hidden; font-size: 10px; line-height: 15px; color: #c6beb6; }
.strip.red { top: 0; background: #622626; }
.strip.green { bottom: 0; background: #2c6b1d; border-top: 1px solid #35d515; }
.strip svg { position: absolute; inset: 0; width: 100%; height: 100%; }
.strip span { position: absolute; top: 0; }
.watermark { position: absolute; left: 2px; bottom: 0; color: #8fc488; font-size: 8px; }
.years { position: relative; height: 18px; margin-right: 42px; margin-left: 1px; border-top: 1px solid #555; background: #1b1b1b; box-shadow: 42px 0 #1b1b1b; }
.years span { top: 4px; font-size: 10px; }
.bottombar { display: flex; align-items: center; height: 30px; gap: 2px; padding: 0 6px 2px 1px; border-top: 1px solid #333; background: linear-gradient(#1d1d1d, #0c0c0c); }
.share { display: flex; align-items: center; gap: 3px; height: 20px; padding: 0 1px 0 3px; margin-right: 2px; border-radius: 2px; background: #2793dd; color: #fff; }
.share svg { width: 14px; height: 14px; }
.flat svg { display: block; }
.bottombar .flat svg { width: 9px; height: 18px; }
.bottombar .wide svg { width: 12px; height: 18px; }
.bottombar .big { margin-left: 5px; }
.bottombar .big svg { width: 18px; height: 18px; }
.arrow { width: 15px; height: 15px; border: 1px solid #333; background: #1a1a1a; font-size: 8px; line-height: 8px; }
.track { flex: 1; height: 15px; border: 1px solid #2c2c2c; background: #080808; }
```
FILE: app.js
```js
const NS = 'http://www.w3.org/2000/svg';
const $ = id => document.getElementById(id);
let seed = 7;
const rnd = () => (seed = (seed * 16807) % 2147483647) / 2147483647;

function svg(host, viewBox, body) {
  const el = document.createElementNS(NS, 'svg');
  el.setAttribute('viewBox', viewBox);
  el.setAttribute('preserveAspectRatio', 'none');
  el.innerHTML = body;
  host.prepend(el);
}
function label(host, text, cls, style) {
  const el = document.createElement('span');
  el.textContent = text;
  el.className = cls;
  el.style.cssText = style;
  host.append(el);
}

/* Ring gauges */
document.querySelectorAll('.ring').forEach(ring => {
  const share = +ring.dataset.share, dark = ring.classList.contains('dark');
  const arc = (r, w, color, from, to) =>
    `<circle cx="43" cy="43" r="${r}" fill="none" stroke="${color}" stroke-width="${w}" pathLength="100" stroke-dasharray="${to - from} 100" stroke-dashoffset="${-from}" transform="rotate(-90 43 43)"/>`;
  let s = '<circle cx="43" cy="43" r="42.500" fill="#1c1c1c" stroke="#3d3d3d"/>';
  if (dark) s += arc(36, 12, '#060606', 0, 100) + arc(39, 5, '#777', 0, share) + arc(34, 6, '#4a5a42', 0, share);
  else s += arc(36, 11, '#42f02f', 0, share) + arc(34, 7, '#5ae95c', 0, share) + arc(36, 11, '#ff8a48', share, 100) + arc(34, 7, '#fa7474', share, 100);
  s += '<circle cx="43" cy="43" r="29.500" fill="url(#g-hub)" stroke="#333"/>';
  svg(ring, '0 0 86 86', s);
});

/* Yearly results, thousands of pounds, 1979-2017 */
const results = [-1.13, 0, 1.87, 1.11, -2.6, 2.44, 3.09, 1.76, .09, .43, .69, -.56, 2.82, .36, -.9, .66, 2.21, -1.78, 4.67, .36, -1.13, 1.92, 1.16, 3.92, 2.08, -4.15, .88, -.1, .13, 5.96, 3.2, -1.6, 7.94, 1.66, 1.92, 1.97, 3.04, 8.11, 3.6];
(() => {
  const W = 627, H = 311, zero = 201.5, k = 23.05, x0 = 9.8, step = 16.05;
  let s = '';
  for (let v = -4; v <= 8; v++) {
    const y = zero - v * k;
    s += `<path d="M0 ${y}H${W}" stroke="${v === 5 ? '#5c5c5c' : '#3f3f3f'}"/>`;
    label($('yearly'), v ? v + '.000' : '0', 'tick' + (v === 5 || v === 0 ? ' strong' : ''), `top:${y / H * 100}%`);
  }
  for (let yr = 1981; yr <= 2017; yr += 3) {
    const x = x0 + (yr - 1979) * step;
    s += `<path d="M${x} 0V${H}" stroke="#3f3f3f"/>`;
    if (yr < 2017) label($('yearly'), yr, 'yr', `left:${(x - 1.5) / W * 100}%`);
  }
  results.forEach((v, i) => {
    const h = Math.abs(v) * k, x = x0 + i * step - 7.5;
    if (v) s += `<rect x="${x + .5}" y="${v > 0 ? zero - h : zero}" width="14" height="${h}" fill="url(#g-${v > 0 ? 'green' : 'red'}-h)" stroke="${v > 0 ? '#2a9a2a' : '#d04a4a'}"/>`;
  });
  s += `<path d="M0 ${zero}H${W}" stroke="#3a35b0"/>`;
  svg($('yearly'), `0 0 ${W} ${H}`, s);
})();

/* Equity curve */
const equity = [10,660,14,660,20,680,74,680,77,686,80,672,84,658,108,657,112,643,150,641,153,678,168,680,171,692,174,677,190,678,194,657,212,657,222,645,223,628,226,656,238,655,242,634,248,608,262,608,265,594,288,593,292,586,298,590,304,622,308,603,316,586,344,586,348,597,350,580,368,580,371,571,407,571,410,556,416,552,420,579,436,579,440,557,466,557,470,543,478,545,483,535,490,553,494,539,514,537,518,512,522,510,523,486,526,528,530,498,536,560,542,575,544,549,556,550,562,573,568,573,570,562,580,566,583,542,602,543,608,532,614,548,618,522,628,510,632,530,636,513,644,512,650,503,657,536,672,536,676,517,688,516,694,485,702,478,716,480,718,498,724,476,729,459,733,475,746,475,750,497,762,500,766,487,784,488,788,472,794,467,796,487,800,474,812,466,818,500,824,504,828,516,832,482,842,482,848,463,854,450,858,421,868,414,874,414,878,427,882,401,916,401,922,385,932,376,936,401,954,402,960,430,966,440,970,426,976,438,980,424,984,440,988,424,992,452,996,430,1002,432,1008,417,1022,418,1026,412,1032,430,1036,430,1042,418,1052,420,1054,413,1066,425,1070,417,1100,417,1104,403,1108,402,1112,380,1114,345,1126,343,1129,320,1132,300,1134,280,1138,330,1141,350,1146,318,1150,312,1158,314,1160,302,1164,330,1168,304,1173,300,1178,342,1184,325,1188,315,1192,345,1196,358,1198,325,1204,298,1214,298,1217,272,1222,270,1224,285,1228,256,1232,218,1240,222,1244,208,1266,208,1270,225,1272,205,1276,202,1280,222,1290,220,1294,208,1304,216,1308,200,1314,181,1342,181,1347,175,1350,156,1364,157,1366,170,1370,128,1376,122,1380,107,1384,145,1388,120,1402,118,1406,95,1408,27,1416,18,1420,30,1426,55,1430,25,1436,21,1442,-12,1454,-12,1457,20,1461,-12,1467,-40];
(() => {
  let line = '', g = '', r = '';
  for (let i = 0; i < equity.length; i += 2) {
    line += `${equity[i]},${equity[i + 1]} `;
    if (i) {
      const seg = `M${equity[i - 2]} ${equity[i - 1]}L${equity[i]} ${equity[i + 1]}`;
      if (equity[i + 1] < equity[i - 1]) g += seg; else r += seg;
    }
  }
  const v = 'vector-effect="non-scaling-stroke" fill="none"';
  svg($('equity'), '7 -81 1478 807', `
    <clipPath id="above"><path d="M0-90h1500v755H0z"/></clipPath><clipPath id="below"><path d="M0 665h1500v100H0z"/></clipPath>
    <polygon points="10,665 ${line} 1467,665" fill="url(#g-equity)" clip-path="url(#above)"/>
    <polygon points="10,665 ${line} 1467,665" fill="#7a2430" clip-path="url(#below)"/>
    <path d="${g}" stroke="#48f010" stroke-width="1.500" ${v}/><path d="${r}" stroke="#ff3a2a" stroke-width="2" ${v}/>
    <path d="M7 665H1485" stroke="#33339a" ${v}/><path d="M9-30V726M1467-81V726" stroke="#eee" stroke-width="1.500" ${v}/>`);
  for (let k = 10; k <= 60; k += 5)
    label($('ax-equity'), k + '.000', 'tick' + (k === 50 ? ' strong' : ''), `top:${(248.5 - (k - 10) * 4.17) / 269 * 100}%`);
  label($('ax-equity'), '65.410', 'tick box lime', 'top:6.5%');
})();

/* Price: middle line, stops and order markers */
const B = 1248;
const shift = a => a.map((n, i) => i % 2 ? n : n + B);
const mid = [16,790,30,800,45,750,57,770,70,850,85,830,100,900,115,1010,130,1020,150,1020,157,880,170,930,185,940,200,950,215,970,228,960,238,860,247,830,258,920,280,930,300,920,315,880,335,900,350,830,360,860,375,930,390,930,405,880,418,760,430,770,440,750,455,640,465,590,478,550,488,640,500,660,515,640,530,670,545,700,560,740,580,730,600,760,615,700,630,690,645,620,655,540,668,560,685,620,700,650,715,620,735,660,750,650,770,610,790,640,808,640,818,520,828,400,840,410,852,430,865,500,885,520,905,540,918,500,935,470,955,490,968,400,975,370,990,400,1010,390,1030,400,1055,400,1065,440,1078,560,1092,600,1110,680,1125,650,1140,700,1160,740,1180,720,1190,650,1205,660,1220,740,1240,750,1258,780,1275,860,
  ...shift([45,850,60,890,72,880,80,800,95,820,110,800,130,820,155,830,170,790,190,780,205,720,220,630,235,650,250,640,270,690,290,720,310,690,320,650,340,680,360,700,380,700,400,680,430,700,455,710,480,700,497,680,508,580,520,480,530,430,545,460,560,440,568,180,580,160,590,240,605,290,618,190,632,230,650,270,660,360,680,350,700,370,715,270,735,290,750,320,770,370,790,450,810,440,825,330,840,310,860,330,880,360,900,400,920,450,940,480,955,600,970,610,990,640,1003,620,1012,500,1025,460,1040,370,1050,300,1065,310,1080,340,1095,310,1108,220,1122,250])];
const upper = [[16,790,30,755,45,740,53,760,56,690,60,760,72,770,85,795,95,830,105,880,112,930,130,945,148,1000],[246,850,248,715,252,870,262,880,290,890],[360,830,363,416,366,730,372,790,380,850,408,850],[485,545,490,590,500,600,538,605,545,660,555,690,570,707,615,707],[679,560,681,430,684,545,700,555,710,573,750,575,770,600],[865,430,868,213,870,400,880,402,886,460,898,510],[1060,400,1062,306,1066,420,1075,515,1085,560,1102,580,1108,650,1150,660,1175,665],[1208,650,1211,566,1215,650,1245,670,1255,710,1263,720,1276,745,1283,777,1308,780,1318,795],
  ...[[268,610,272,640,280,660,305,668],[568,68,568,180],[651,250,653,125,657,250,670,290],[748,260,750,186,755,300,770,310,785,370,795,395,815,395],[870,290,885,300,890,330,910,385,930,410,945,430,950,490,965,530,985,560],[1118,260,1120,86,1124,260]].map(shift)];
const lower = [[22,830,33,915,35,805,50,805],[150,1045,170,1010,180,996,226,994,230,900,245,860],[298,940,302,1062,305,945,345,938,352,900],[404,900,407,1008,410,865,440,862,445,800,452,720,458,660,480,660],[613,700,616,978,618,795,635,780,640,720,650,660],[767,640,769,825,773,690,785,668,822,667,826,560,832,552,880,552],[906,540,908,685,912,600,930,580,950,540,968,535,975,515,985,480,990,470,1050,470,1052,450],[1181,700,1183,822,1186,720],
  ...[[72,780,74,1066,78,876,155,875,165,855,195,845,205,800,215,750,222,720,255,718],[307,680,309,760,312,700],[453,740,456,790,460,745,490,740,505,680,520,600,525,540,563,530,566,375,600,373,612,340,640,330,660,320],[674,340,676,472,680,415,700,410,715,360],[816,440,818,532,822,420,840,400,850,380],[984,640,988,718,992,680,1005,678,1015,560,1030,540,1038,440,1050,390,1090,383,1105,300],[1048,116,1048,240]].map(shift)];
const dashed = [[497,545,512,560,525,600,540,640],[1110,640,1130,740,1150,800,1165,810,1180,770], ...[[585,180,610,195,640,200],[1003,640,1020,590,1035,540,1045,430],[1062,270,1080,240,1095,232]].map(shift)];
const marks = {
  rx: [180,884,184,912,312,849,344,823,427,733,466,562,660,534,680,598,774,576,798,601,832,386,844,382,856,430,920,469,938,426,974,360,990,358,1004,354,1022,367,1048,373, ...shift([38,800,92,780,104,800,122,778,135,785,150,802,174,752,182,762,232,612,244,620,252,632,320,622,338,635,345,650,365,658,376,660,408,650,432,668,345,690,436,690,478,676,488,676,533,418,550,410,548,425,578,160,603,278,606,290,630,200,640,215,654,295,665,303,693,285,694,308,718,248,738,248,837,298,855,284,864,320,874,322,1022,433,1026,446,1032,342,1042,305,1064,275,1070,296,1088,292,1112,210,1122,252,1000,580])],
  ra: [30,770,22,795,118,945,135,953,247,848,274,893,298,880,304,860,365,845,382,865,402,826,490,610,500,600,508,618,488,640,556,686,598,730,706,570,752,590,874,443,870,520,896,505,1063,445,1088,570,1119,634,1134,660,1116,685,1160,692,1176,670,1210,680,1234,690,1272,780,1284,795,1280,820, ...shift([26,780,34,800,34,822,64,820,270,680,297,692,455,665,428,690,755,335,762,310,800,412,812,384,928,412,962,545,976,552])],
  gx: [27,854,132,1045,138,1050,280,957,364,927,376,925,392,952,404,922,490,682,502,686,516,684,562,765,598,800,711,680,756,668,770,664,880,546,1090,670,1114,747,1133,730,1166,763,1182,712,1205,712,1240,776,1277,868,1272,899, ...shift([28,870,22,898,40,895,65,898,120,865,134,875,148,868,50,858,238,690,248,700,240,705,255,692,318,695,330,705,364,725,378,728,410,715,434,740,450,755,574,300,676,335,665,404,804,466,766,402,875,396,930,498,963,646,980,668,988,593,1026,540])],
  ga: [36,815,174,966,182,1003,245,860,300,930,308,945,344,895,423,808,466,625,480,665,658,657,672,615,788,660,832,510,844,488,860,508,910,520,934,518,918,543,975,443,992,425,1000,445,1014,430,1035,457,1055,450, ...shift([80,820,88,840,100,898,170,825,178,835,345,740,405,705,455,725,468,722,486,738,534,505,548,505,554,535,588,305,606,375,630,288,645,305,683,380,698,380,694,410,716,345,724,310,738,320,738,360,750,388,820,410,838,388,854,365,865,390,1020,525,1043,393,1056,352,1068,373,1080,400,1106,265,1120,300,1115,318])]
};
(() => {
  const colors = ['#5c0a9c', '#c86a62', '#5aa55a', '#6d12ad', '#c07a72', '#7a18b5'];
  const d = colors.map(() => '');
  for (let i = 0; i < mid.length - 2; i += 2) {
    const [x1, y1, x2, y2] = mid.slice(i, i + 4);
    for (let x = x1; x < x2; x += 1.5) {
      const y = y1 + (y2 - y1) * (x - x1) / (x2 - x1) + (rnd() - .5) * 54;
      const h = 20 + rnd() * 44;
      d[Math.floor(rnd() * 6)] += `M${x} ${(y - h / 2).toFixed(1)}l${(rnd() * 6).toFixed(1)} ${h.toFixed(1)}`;
    }
  }
  let s = `<polyline points="${mid}" fill="none" stroke="#4b0a86" stroke-width="7"/>`;
  s += d.map((p, i) => `<path d="${p}" fill="none" stroke="${colors[i]}" stroke-width="2.800"/>`).join('');
  const poly = (a, c, extra = '') => a.map(p => `<polyline points="${p}" fill="none" stroke="${c}" stroke-width="4" ${extra}/>`).join('');
  s += poly(dashed, '#8a4040', 'stroke-dasharray="7 7"') + poly(upper, '#cf5b5b') + poly(lower, '#48b84c');
  const shape = {
    x: 'm-14-8 6-6 8 4 8-4 6 6-3 8 3 8-6 6-8-4-8 4-6-6 3-8z',
    u: 'm0-16 13 15h-7v16h-12v-16h-7z',
    d: 'm0 16 13-15h-7v-16h-12v16h-7z'
  };
  const put = (a, k, c) => {
    let p = '';
    for (let i = 0; i < a.length; i += 2) p += `M${a[i]} ${a[i + 1]}${shape[k]}`;
    return `<path d="${p}" fill="${c}"/>`;
  };
  s += put(marks.ra, 'd', '#ff4343') + put(marks.ga, 'u', '#2dff1a') + put(marks.rx, 'x', '#ff4747') + put(marks.gx, 'x', '#35ff18');
  s = s.replace(/(M[\d.]+ [\d.]+)m/g, '$1m');
  svg($('price'), '12 15 2388 1101', s);
  [['1', 361, 'strong'], ['0,95', 393], ['0,85', 462.5], ['0,8', 497.5], ['0,75', 532.5], ['0,7', 567.5], ['0,65', 602.5], ['0,6', 637], ['0,55', 672], ['0,5', 707, 'strong'], ['0,9179', 411, 'box rosy'], ['0,9108', 420.5, 'box rosy'], ['0,8787', 447, 'box plum'], ['0,8884', 436.5, 'box gold']]
    .forEach(([t, y, c]) => label($('ax-price'), t, 'tick ' + (c || ''), `top:${(y - 355) / 367 * 100}%`));
})();

/* Order quantity strips */
function strip(id, items, color, dense) {
  let p = '';
  for (let x = 0; x < 796; x += 2 + rnd() * dense) p += `M${x.toFixed(0)}.5 0v15`;
  items.forEach(([t, x]) => label($(id), t, '', `left:${(x - 12) / 23.88}%`));
  svg($(id), '0 0 796 15', `<path d="${p}" stroke="${color}" stroke-width="1"/>`);
}
strip('sells', [['9',352],['3',376],['5',397],['732',430],['2',508],['7',530],['13',553],['9',591],['629',635],['05',688],['3213',732],['7',808],['69',838],['8',876],['954',898],['2',964],['5',1000],['2141',1020],['0',1098],['7',1128],['6',1148],['4',1188],['6',1216],['22',1258],['38',1304],['626',1338],['3',1413],['0',1443],['1',1525],['055',1553],['7619',1622],['4',1722],['014',1752],['0',1808],['0',1829],['961',1858],['9',1930],['9',1952],['7',1980],['26',2030],['49',2074],['966',2122],['18',2190],['018',2248],['01',2302],['13',2338],['4',2374]], '#9a3838', 6);
strip('buys', [['0.6212',40],['0.5347',158],['21',256],['126',312],['35',368],['704',432],['5',502],['5',526],['53',550],['0',594],['587',636],['36',689],['185',728],['14',798],['513',842],['13',920],['35',956],['6',1010],['2',1040],['77',1062],['37',1140],['04',1178],['9',1216],['29',1256],['6',1306],['50',1326],['21',1362],['9',1416],['4',1466],['7',1520],['016',1548],['948',1628],['9',1720],['6',1755],['3',1778],['5',1824],['1359',1845],['43',1922],['10',1958],['35',2000],['3',2068],['208',2120],['70',2186],['920',2248],['6',2312],['3',2336],['2',2366]], '#2dc212', 8);

/* Oscillators */
const spikes = [14,180,29,186,78,182,128,162,149,195,220,176,236,150,257,165,275,158,294,188,314,158,330,160,355,176,360,172,385,194,404,170,417,165,433,168,471,168,499,192,502,178,524,176,603,165,674,165,689,185,697,192,728,170,752,195,764,176];
function oscillator(id, H, zero, depth, lines) {
  let white = `M0 ${zero}`, gray = '', dark = '';
  for (let x = 0; x <= 788; x += 1) {
    const y = rnd() < .4 ? 4 + rnd() * 14 * depth : 3 + rnd() * 5;
    white += `L${x} ${y.toFixed(1)}`;
    if (rnd() < .05) gray += `M${x}.5 4v${(10 + rnd() * 22 * depth).toFixed(1)}`;
    if (rnd() < .75) dark += `M${x}.5 ${zero + 1}v${(rnd() * 9).toFixed(1)}`;
  }
  for (let i = 0; i < spikes.length; i += 2) gray += `M${spikes[i]}.5 4v${((spikes[i + 1] - 85) / 3 * depth).toFixed(1)}`;
  white += `V${zero}z`;
  svg($(id), `0 0 796 ${H}`, `<path d="${white}" fill="#fff"/><path d="${gray}" stroke="#555"/>` + (lines ? '' : `<path d="${dark}" stroke="#ddd"/><path d="M0 ${zero}H788" stroke="#aaa"/>`) + (lines || ''));
}
oscillator('xmax', 64, 51, 1, '');
oscillator('rsi', 42, 40, .55, '<path d="M0 14.500H796" stroke="#4a48b8"/><path d="M0 28.500H788" stroke="#a5a5ee" stroke-width="2"/><path d="M788 28.500h8" stroke="#1b1b80" stroke-width="2"/>');
[['1,0066', 20, 'box'], ['0,5', 50], ['0', 80, 'strong']].forEach(([t, y, c]) => label($('ax-xmax'), t, 'tick ' + (c || ''), `top:${y}%`));
[['100', 4, 'strong'], ['50', 52], ['0', 88, 'strong'], ['79,746', 25, 'box']].forEach(([t, y, c]) => label($('ax-rsi'), t, 'tick ' + (c || ''), `top:${y}%`));

[851.3, 890.3, 930.3, 970.3, 1010.3, 1050.6, 1091, 1131.6, 1172, 1213, 1254.5, 1295, 1335.6, 1377, 1418, 1459.6, 1501, 1542, 1583]
  .forEach((x, i) => label($('years'), 1980 + i * 2, '', `left:${(x - 838) / 7.96}%`));
```
